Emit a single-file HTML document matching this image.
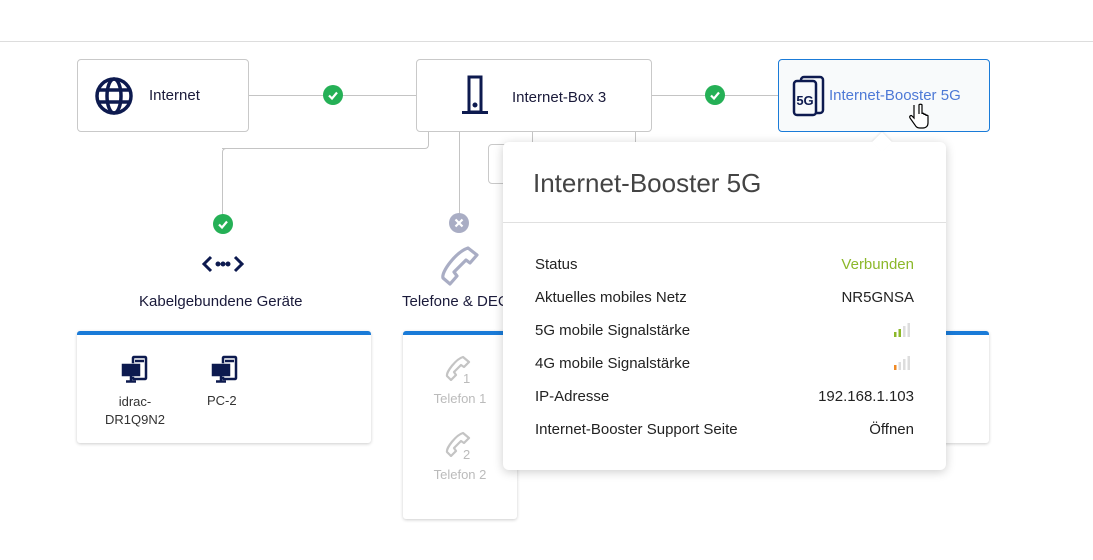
<!DOCTYPE html>
<html><head><meta charset="utf-8"><style>
*{box-sizing:border-box;margin:0;padding:0}
body{width:1093px;height:560px;background:#fff;font-family:"Liberation Sans",sans-serif;color:#1a1a3a;position:relative;overflow:hidden}
.a{position:absolute}
.box{position:absolute;border:1px solid #c9c9c9;border-radius:4px;background:#fff}
.ln{position:absolute;background:#c4c4c4}
.ok{position:absolute;width:20px;height:20px;border-radius:50%;background:#25b056}
.card{position:absolute;background:#fff;border-top:4px solid #1a7bd8;border-radius:3px;box-shadow:0 1px 3px rgba(0,0,0,.2)}
.row{position:absolute;left:32px;right:32px;height:20px;font-size:15px;color:#222}
.row span{position:absolute;right:0}
</style></head><body>
<div class="ln" style="left:0;top:41px;width:1093px;height:1px;background:#ddd"></div>

<div class="ln" style="left:248px;top:95px;width:168px;height:1px"></div>
<div class="ln" style="left:651px;top:95px;width:127px;height:1px"></div>
<div class="a" style="left:222px;top:131px;width:207px;height:18px;border:1px solid #c4c4c4;border-top:none;border-radius:0 0 4px 0;border-left:none"></div>
<div class="a" style="left:222px;top:148px;width:10px;height:70px;border-left:1px solid #c4c4c4;border-top:1px solid #c4c4c4;border-radius:4px 0 0 0"></div>
<div class="ln" style="left:459px;top:131px;width:1px;height:84px"></div>
<div class="ln" style="left:532px;top:131px;width:1px;height:12px"></div>
<div class="ln" style="left:635px;top:131px;width:1px;height:12px"></div>
<div class="box" style="left:488px;top:144px;width:30px;height:40px"></div>

<div class="box" style="left:77px;top:59px;width:172px;height:73px">
<svg class="a" style="left:16px;top:16px" width="40" height="40" viewBox="0 0 40 40" fill="none" stroke="#0d1a4f" stroke-width="3.5"><circle cx="20" cy="20" r="17"/><ellipse cx="20" cy="20" rx="7" ry="17"/><line x1="3" y1="14" x2="37" y2="14"/><line x1="3" y1="26" x2="37" y2="26"/></svg>
<div class="a" style="left:71px;top:27px;font-size:15px">Internet</div></div>
<div class="ok" style="left:323px;top:85px"><svg width="20" height="20"><path d="M6 10.5l3 3 5-6" stroke="#fff" stroke-width="2.2" fill="none"/></svg></div>

<div class="box" style="left:416px;top:59px;width:236px;height:73px">
<svg class="a" style="left:44px;top:15px" width="28" height="40" viewBox="0 0 28 40" fill="none" stroke="#0d1a4f" stroke-width="3"><rect x="8" y="2" width="12" height="35"/><line x1="1" y1="37.5" x2="27" y2="37.5"/><circle cx="14" cy="30" r="1" fill="#0d1a4f"/></svg>
<div class="a" style="left:95px;top:29px;font-size:15px">Internet-Box 3</div></div>
<div class="ok" style="left:705px;top:85px"><svg width="20" height="20"><path d="M6 10.5l3 3 5-6" stroke="#fff" stroke-width="2.2" fill="none"/></svg></div>

<div class="box" style="left:778px;top:59px;width:212px;height:73px;border-color:#1a7bd8;background:#f8fafb">
<svg class="a" style="left:12px;top:15px" width="36" height="42" viewBox="0 0 36 42" fill="none" stroke="#0d1a4f" stroke-width="2.5"><rect x="10" y="2" width="22" height="36" rx="3"/><rect x="3" y="6" width="22" height="34" rx="3" fill="#f8fafb"/><text x="14" y="30" font-family="Liberation Sans" font-weight="bold" font-size="13" fill="#0d1a4f" stroke="none" text-anchor="middle">5G</text></svg>
<div class="a" style="left:50px;top:27px;font-size:15px;color:#4d79d6">Internet-Booster 5G</div></div>
<svg class="a" style="left:908px;top:103px" width="22" height="26" viewBox="0 0 22 26"><path d="M6 2v13l-2-2c-1-1-3 0-2 2l5 7c1 2 3 3 5 3h3c3 0 5-2 5-5v-7c0-1-2-1-2 0v-1c0-1-2-1-2 0v-1c0-1-2-1-2 0V2c0-1-3-1-3 0v9" fill="#fff" stroke="#000" stroke-width="1.2"/></svg>

<div class="ok" style="left:213px;top:214px"><svg width="20" height="20"><path d="M6 10.5l3 3 5-6" stroke="#fff" stroke-width="2.2" fill="none"/></svg></div>
<div class="ok" style="left:449px;top:213px;background:#a9adc4"><svg width="20" height="20"><path d="M6.5 6.5l7 7M13.5 6.5l-7 7" stroke="#fff" stroke-width="2.2"/></svg></div>
<svg class="a" style="left:202px;top:254px" width="42" height="20" viewBox="0 0 42 20" fill="none" stroke="#0d1a4f" stroke-width="3"><path d="M9 3l-7 7 7 7M33 3l7 7-7 7"/><circle cx="16" cy="10" r="1" fill="#0d1a4f"/><circle cx="21" cy="10" r="1" fill="#0d1a4f"/><circle cx="26" cy="10" r="1" fill="#0d1a4f"/></svg>
<svg class="a" style="left:440px;top:246px" width="40" height="40" viewBox="0 0 40 40" fill="none" stroke="#a9adc4" stroke-width="3.2" stroke-linejoin="round"><path d="M28 2l9 7-7 8-4-3-12 12 3 4-7 8-7-6C1 26 16 6 28 2z"/></svg>
<div class="a" style="left:139px;top:293px;font-size:15px">Kabelgebundene Geräte</div>
<div class="a" style="left:402px;top:293px;font-size:15px">Telefone &amp; DECT</div>

<div class="card" style="left:77px;top:331px;width:294px;height:112px">
<svg class="a" style="left:43px;top:20px" width="28" height="28" viewBox="0 0 28 28" fill="none" stroke="#0d1a4f" stroke-width="2.5"><rect x="13" y="2" width="13" height="22" rx="1"/><line x1="15" y1="6" x2="24" y2="6"/><rect x="2" y="9" width="18" height="12" fill="#0d1a4f" stroke="#fff" stroke-width="1.5"/><rect x="3" y="10" width="16" height="10" stroke="#0d1a4f" stroke-width="2.5" fill="#0d1a4f"/><line x1="11" y1="21" x2="11" y2="26"/><line x1="6" y1="26.5" x2="16" y2="26.5"/></svg>
<div class="a" style="left:20px;top:58px;width:76px;text-align:center;font-size:13px;line-height:18px;color:#333">idrac-<br>DR1Q9N2</div>
<svg class="a" style="left:133px;top:20px" width="28" height="28" viewBox="0 0 28 28" fill="none" stroke="#0d1a4f" stroke-width="2.5"><rect x="13" y="2" width="13" height="22" rx="1"/><line x1="15" y1="6" x2="24" y2="6"/><rect x="2" y="9" width="18" height="12" fill="#0d1a4f" stroke="#fff" stroke-width="1.5"/><rect x="3" y="10" width="16" height="10" stroke="#0d1a4f" stroke-width="2.5" fill="#0d1a4f"/><line x1="11" y1="21" x2="11" y2="26"/><line x1="6" y1="26.5" x2="16" y2="26.5"/></svg>
<div class="a" style="left:130px;top:58px;font-size:13px;color:#333">PC-2</div></div>

<div class="card" style="left:403px;top:331px;width:114px;height:188px">
<svg class="a" style="left:42px;top:20px" width="26" height="26" viewBox="0 0 26 26" fill="none" stroke="#c4c4c4" stroke-width="2.2" stroke-linejoin="round"><path d="M18 2l6 5-5 5-3-2-7 7 2 3-5 5-4-4C1 17 11 4 18 2z"/></svg>
<div class="a" style="left:60px;top:36px;font-size:13px;color:#bbb">1</div>
<div class="a" style="left:0;width:114px;text-align:center;top:56px;font-size:13px;color:#bbb">Telefon 1</div>
<svg class="a" style="left:42px;top:96px" width="26" height="26" viewBox="0 0 26 26" fill="none" stroke="#c4c4c4" stroke-width="2.2" stroke-linejoin="round"><path d="M18 2l6 5-5 5-3-2-7 7 2 3-5 5-4-4C1 17 11 4 18 2z"/></svg>
<div class="a" style="left:60px;top:112px;font-size:13px;color:#bbb">2</div>
<div class="a" style="left:0;width:114px;text-align:center;top:132px;font-size:13px;color:#bbb">Telefon 2</div></div>

<div class="card" style="left:900px;top:331px;width:89px;height:112px"></div>

<div class="a" style="left:503px;top:142px;width:443px;height:328px;background:#fff;border-radius:6px;box-shadow:0 2px 10px rgba(0,0,0,.2)">
<div class="a" style="left:372px;top:-7px;width:14px;height:14px;background:#fff;transform:rotate(45deg);box-shadow:-1px -1px 2px rgba(0,0,0,.08)"></div>
<div class="a" style="left:30px;top:26px;font-size:26px;color:#444">Internet-Booster 5G</div>
<div class="a" style="left:0;right:0;top:80px;height:1px;background:#e0e0e0"></div>
<div class="row" style="top:114px">Status<span style="color:#8cb82a">Verbunden</span></div>
<div class="row" style="top:147px">Aktuelles mobiles Netz<span>NR5GNSA</span></div>
<div class="row" style="top:180px">5G mobile Signalstärke<span style="top:0px"><svg width="20" height="15"><rect x="0" y="10" width="2.5" height="5" fill="#8cb82a"/><rect x="4.5" y="7" width="2.5" height="8" fill="#8cb82a"/><rect x="9" y="4" width="2.5" height="11" fill="#ddd"/><rect x="13.5" y="1" width="2.5" height="14" fill="#ddd"/></svg></span></div>
<div class="row" style="top:213px">4G mobile Signalstärke<span style="top:0px"><svg width="20" height="15"><rect x="0" y="10" width="2.5" height="5" fill="#f08a24"/><rect x="4.5" y="7" width="2.5" height="8" fill="#ddd"/><rect x="9" y="4" width="2.5" height="11" fill="#ddd"/><rect x="13.5" y="1" width="2.5" height="14" fill="#ddd"/></svg></span></div>
<div class="row" style="top:246px">IP-Adresse<span>192.168.1.103</span></div>
<div class="row" style="top:279px">Internet-Booster Support Seite<span>Öffnen</span></div>
</div>
</body></html>
